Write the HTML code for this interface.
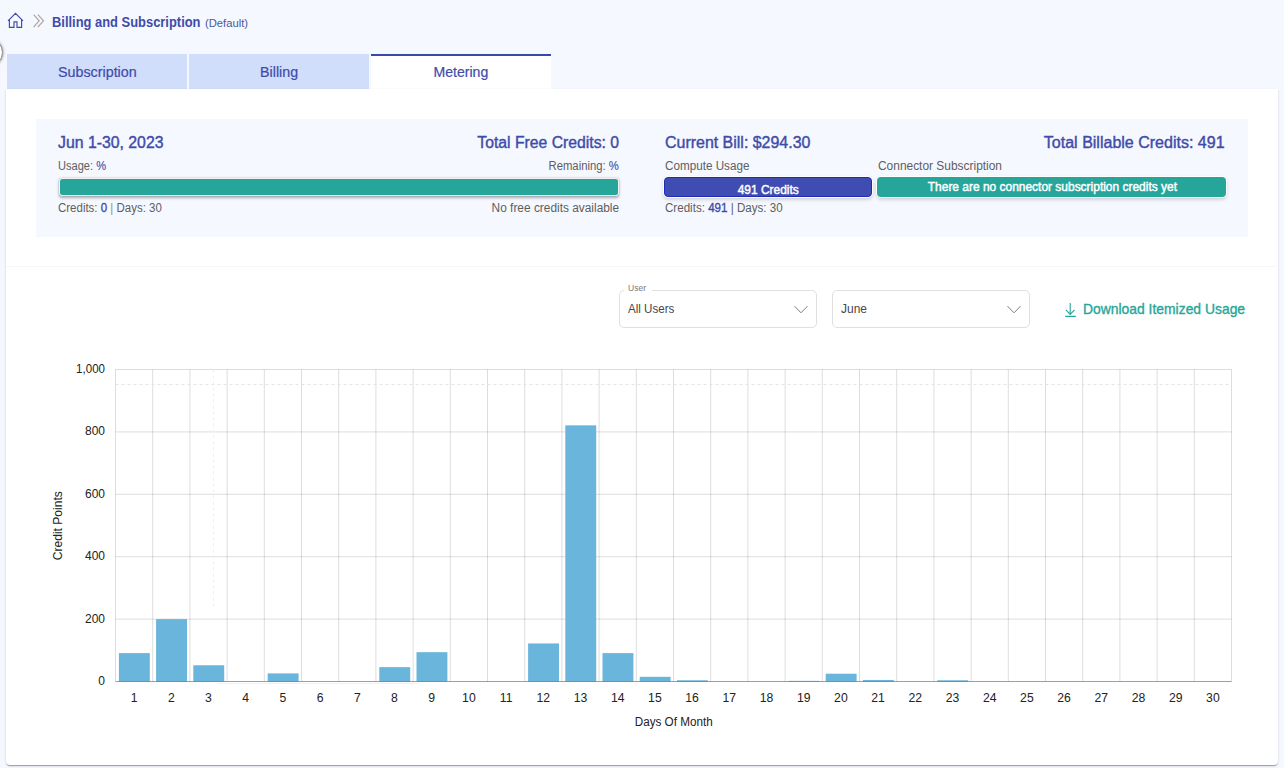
<!DOCTYPE html>
<html><head><meta charset="utf-8">
<style>
html,body{margin:0;padding:0;}
body{width:1284px;height:768px;overflow:hidden;position:relative;background:#F5F8FE;font-family:"Liberation Sans",sans-serif;}
.a{position:absolute;white-space:nowrap;line-height:1;}
</style></head><body>

<div class="a" style="left:-26px;top:38px;width:27px;height:27px;border-radius:50%;background:#fff;border:1px solid #8a8a8a;box-shadow:0 0 3px rgba(0,0,0,.45);"></div>

<svg class="a" style="left:0;top:0" width="50" height="32" viewBox="0 0 50 32">
  <path d="M8 20.8 L15.5 13.3 L23 20.8 M9.4 19.6 V27.3 H14 V21.9 H17 V27.3 H21.6 V19.6" fill="none" stroke="#3F4BA9" stroke-width="1.15"/>
  <path d="M33.6 14.6 L39.2 20.8 L33.6 27 M37.9 14.6 L43.5 20.8 L37.9 27" fill="none" stroke="#ADA6A0" stroke-width="1.15"/>
</svg>

<div class="a" style="left:7px;top:54px;width:180px;height:35px;background:#D0DDFB;"></div>
<div class="a" style="left:189px;top:54px;width:180px;height:35px;background:#D0DDFB;"></div>
<div class="a" style="left:371px;top:54px;width:180px;height:35px;background:#fff;border-top:2px solid #3949AB;box-sizing:border-box;"></div>

<div class="a" style="left:6px;top:89px;width:1272px;height:676px;background:#fff;border-radius:0 0 4px 4px;box-shadow:0 2px 1px -1px rgba(0,0,0,.2),0 1px 1px 0 rgba(0,0,0,.14),0 1px 3px 0 rgba(0,0,0,.12);"></div>

<div class="a" style="left:36px;top:119px;width:1212px;height:118px;background:#F5F8FE;"></div>

<div class="a" style="left:59px;top:178px;width:560px;height:18px;background:#F5EFEE;border-radius:3px;box-shadow:0 1.5px 3px rgba(0,0,0,.3),0 0 1.5px rgba(0,0,0,.22);"></div>
<div class="a" style="left:60px;top:179px;width:558px;height:16px;background:#26A69A;border-radius:2.5px;"></div>
<div class="a" style="left:664px;top:177px;width:208px;height:20px;box-sizing:border-box;background:#3F4DB3;border:1.5px solid #1F2AB8;border-radius:4px;box-shadow:0 0 0 1px rgba(255,255,255,.9),0 2px 4px rgba(0,0,0,.22);"></div>
<div class="a" style="left:877px;top:177px;width:349px;height:20px;background:#26A69A;border-radius:4px;box-shadow:0 0 0 1px rgba(255,255,255,.9),0 2px 4px rgba(0,0,0,.22);"></div>

<div class="a" style="left:6px;top:266px;width:1270px;height:1px;background:#F6F6F8;"></div>

<div class="a" style="left:619px;top:290px;width:198px;height:38px;box-sizing:border-box;border:1px solid #E0E0E0;border-radius:5px;background:#fff;"></div>
<div class="a" style="left:624px;top:288px;width:28px;height:4px;background:#fff;"></div>
<div class="a" style="left:832px;top:290px;width:198px;height:38px;box-sizing:border-box;border:1px solid #E0E0E0;border-radius:5px;background:#fff;"></div>
<svg class="a" style="left:793px;top:305px" width="16" height="10" viewBox="0 0 16 10"><path d="M1.5 1.2 L8 7.8 L14.5 1.2" fill="none" stroke="#7d7d7d" stroke-width="1"/></svg>
<svg class="a" style="left:1006px;top:305px" width="16" height="10" viewBox="0 0 16 10"><path d="M1.5 1.2 L8 7.8 L14.5 1.2" fill="none" stroke="#7d7d7d" stroke-width="1"/></svg>
<svg class="a" style="left:1064px;top:302px" width="14" height="16" viewBox="0 0 14 16"><path d="M6.2 1 V12.4 M1.9 7.8 L6.2 12.4 L10.5 7.8 M1.2 14.4 H11.8" fill="none" stroke="#26A69A" stroke-width="1.1"/></svg>

<svg class="a" style="left:0;top:0" width="1284" height="768" viewBox="0 0 1284 768">
<line x1="115.5" y1="369.50" x2="1231.5" y2="369.50" stroke="rgba(0,0,0,0.135)" stroke-width="1"/>
<line x1="115.5" y1="431.90" x2="1231.5" y2="431.90" stroke="rgba(0,0,0,0.135)" stroke-width="1"/>
<line x1="115.5" y1="494.30" x2="1231.5" y2="494.30" stroke="rgba(0,0,0,0.135)" stroke-width="1"/>
<line x1="115.5" y1="556.70" x2="1231.5" y2="556.70" stroke="rgba(0,0,0,0.135)" stroke-width="1"/>
<line x1="115.5" y1="619.10" x2="1231.5" y2="619.10" stroke="rgba(0,0,0,0.135)" stroke-width="1"/>
<line x1="115.5" y1="681.50" x2="1231.5" y2="681.50" stroke="rgba(0,0,0,0.135)" stroke-width="1"/>
<line x1="115.50" y1="369.5" x2="115.50" y2="681.5" stroke="rgba(0,0,0,0.135)" stroke-width="1"/>
<line x1="152.70" y1="369.5" x2="152.70" y2="681.5" stroke="rgba(0,0,0,0.135)" stroke-width="1"/>
<line x1="189.90" y1="369.5" x2="189.90" y2="681.5" stroke="rgba(0,0,0,0.135)" stroke-width="1"/>
<line x1="227.10" y1="369.5" x2="227.10" y2="681.5" stroke="rgba(0,0,0,0.135)" stroke-width="1"/>
<line x1="264.30" y1="369.5" x2="264.30" y2="681.5" stroke="rgba(0,0,0,0.135)" stroke-width="1"/>
<line x1="301.50" y1="369.5" x2="301.50" y2="681.5" stroke="rgba(0,0,0,0.135)" stroke-width="1"/>
<line x1="338.70" y1="369.5" x2="338.70" y2="681.5" stroke="rgba(0,0,0,0.135)" stroke-width="1"/>
<line x1="375.90" y1="369.5" x2="375.90" y2="681.5" stroke="rgba(0,0,0,0.135)" stroke-width="1"/>
<line x1="413.10" y1="369.5" x2="413.10" y2="681.5" stroke="rgba(0,0,0,0.135)" stroke-width="1"/>
<line x1="450.30" y1="369.5" x2="450.30" y2="681.5" stroke="rgba(0,0,0,0.135)" stroke-width="1"/>
<line x1="487.50" y1="369.5" x2="487.50" y2="681.5" stroke="rgba(0,0,0,0.135)" stroke-width="1"/>
<line x1="524.70" y1="369.5" x2="524.70" y2="681.5" stroke="rgba(0,0,0,0.135)" stroke-width="1"/>
<line x1="561.90" y1="369.5" x2="561.90" y2="681.5" stroke="rgba(0,0,0,0.135)" stroke-width="1"/>
<line x1="599.10" y1="369.5" x2="599.10" y2="681.5" stroke="rgba(0,0,0,0.135)" stroke-width="1"/>
<line x1="636.30" y1="369.5" x2="636.30" y2="681.5" stroke="rgba(0,0,0,0.135)" stroke-width="1"/>
<line x1="673.50" y1="369.5" x2="673.50" y2="681.5" stroke="rgba(0,0,0,0.135)" stroke-width="1"/>
<line x1="710.70" y1="369.5" x2="710.70" y2="681.5" stroke="rgba(0,0,0,0.135)" stroke-width="1"/>
<line x1="747.90" y1="369.5" x2="747.90" y2="681.5" stroke="rgba(0,0,0,0.135)" stroke-width="1"/>
<line x1="785.10" y1="369.5" x2="785.10" y2="681.5" stroke="rgba(0,0,0,0.135)" stroke-width="1"/>
<line x1="822.30" y1="369.5" x2="822.30" y2="681.5" stroke="rgba(0,0,0,0.135)" stroke-width="1"/>
<line x1="859.50" y1="369.5" x2="859.50" y2="681.5" stroke="rgba(0,0,0,0.135)" stroke-width="1"/>
<line x1="896.70" y1="369.5" x2="896.70" y2="681.5" stroke="rgba(0,0,0,0.135)" stroke-width="1"/>
<line x1="933.90" y1="369.5" x2="933.90" y2="681.5" stroke="rgba(0,0,0,0.135)" stroke-width="1"/>
<line x1="971.10" y1="369.5" x2="971.10" y2="681.5" stroke="rgba(0,0,0,0.135)" stroke-width="1"/>
<line x1="1008.30" y1="369.5" x2="1008.30" y2="681.5" stroke="rgba(0,0,0,0.135)" stroke-width="1"/>
<line x1="1045.50" y1="369.5" x2="1045.50" y2="681.5" stroke="rgba(0,0,0,0.135)" stroke-width="1"/>
<line x1="1082.70" y1="369.5" x2="1082.70" y2="681.5" stroke="rgba(0,0,0,0.135)" stroke-width="1"/>
<line x1="1119.90" y1="369.5" x2="1119.90" y2="681.5" stroke="rgba(0,0,0,0.135)" stroke-width="1"/>
<line x1="1157.10" y1="369.5" x2="1157.10" y2="681.5" stroke="rgba(0,0,0,0.135)" stroke-width="1"/>
<line x1="1194.30" y1="369.5" x2="1194.30" y2="681.5" stroke="rgba(0,0,0,0.135)" stroke-width="1"/>
<line x1="1231.50" y1="369.5" x2="1231.50" y2="681.5" stroke="rgba(0,0,0,0.135)" stroke-width="1"/>
<line x1="115.5" y1="384.5" x2="1231.5" y2="384.5" stroke="#E4E4E4" stroke-width="1" stroke-dasharray="3,3"/>
<line x1="213.5" y1="369.5" x2="213.5" y2="610" stroke="#EFEFEF" stroke-width="1" stroke-dasharray="3,3"/>
<rect x="118.90" y="653.11" width="30.90" height="28.39" fill="#69B5DC"/>
<rect x="156.10" y="619.10" width="30.90" height="62.40" fill="#69B5DC"/>
<rect x="193.30" y="665.28" width="30.90" height="16.22" fill="#69B5DC"/>
<rect x="267.70" y="673.39" width="30.90" height="8.11" fill="#69B5DC"/>
<rect x="379.30" y="667.15" width="30.90" height="14.35" fill="#69B5DC"/>
<rect x="416.50" y="652.17" width="30.90" height="29.33" fill="#69B5DC"/>
<rect x="528.10" y="643.44" width="30.90" height="38.06" fill="#69B5DC"/>
<rect x="565.30" y="425.35" width="30.90" height="256.15" fill="#69B5DC"/>
<rect x="602.50" y="653.11" width="30.90" height="28.39" fill="#69B5DC"/>
<rect x="639.70" y="676.82" width="30.90" height="4.68" fill="#69B5DC"/>
<rect x="676.90" y="680.25" width="30.90" height="1.25" fill="#69B5DC"/>
<rect x="788.50" y="680.88" width="30.90" height="0.62" fill="#69B5DC"/>
<rect x="825.70" y="673.70" width="30.90" height="7.80" fill="#69B5DC"/>
<rect x="862.90" y="679.94" width="30.90" height="1.56" fill="#69B5DC"/>
<rect x="937.30" y="680.25" width="30.90" height="1.25" fill="#69B5DC"/>
<line x1="115.5" y1="681.5" x2="1231.5" y2="681.5" stroke="rgba(0,0,0,0.28)" stroke-width="1"/>
<line x1="218" y1="683.5" x2="420" y2="683.5" stroke="#F2F2F2" stroke-width="1"/>
<text x="105" y="372.90" text-anchor="end" font-family="Liberation Sans" font-size="12.2" fill="#222" textLength="28.9" lengthAdjust="spacingAndGlyphs">1,000</text>
<text x="105" y="435.30" text-anchor="end" font-family="Liberation Sans" font-size="12.2" fill="#222" textLength="20.0" lengthAdjust="spacingAndGlyphs">800</text>
<text x="105" y="497.70" text-anchor="end" font-family="Liberation Sans" font-size="12.2" fill="#222" textLength="20.0" lengthAdjust="spacingAndGlyphs">600</text>
<text x="105" y="560.10" text-anchor="end" font-family="Liberation Sans" font-size="12.2" fill="#222" textLength="20.0" lengthAdjust="spacingAndGlyphs">400</text>
<text x="105" y="622.50" text-anchor="end" font-family="Liberation Sans" font-size="12.2" fill="#222" textLength="20.0" lengthAdjust="spacingAndGlyphs">200</text>
<text x="105" y="684.90" text-anchor="end" font-family="Liberation Sans" font-size="12.2" fill="#222" textLength="6.7" lengthAdjust="spacingAndGlyphs">0</text>
<text x="134.10" y="701.8" text-anchor="middle" font-family="Liberation Sans" font-size="12.2" fill="#222">1</text>
<text x="171.30" y="701.8" text-anchor="middle" font-family="Liberation Sans" font-size="12.2" fill="#222">2</text>
<text x="208.50" y="701.8" text-anchor="middle" font-family="Liberation Sans" font-size="12.2" fill="#222">3</text>
<text x="245.70" y="701.8" text-anchor="middle" font-family="Liberation Sans" font-size="12.2" fill="#222">4</text>
<text x="282.90" y="701.8" text-anchor="middle" font-family="Liberation Sans" font-size="12.2" fill="#222">5</text>
<text x="320.10" y="701.8" text-anchor="middle" font-family="Liberation Sans" font-size="12.2" fill="#222">6</text>
<text x="357.30" y="701.8" text-anchor="middle" font-family="Liberation Sans" font-size="12.2" fill="#222">7</text>
<text x="394.50" y="701.8" text-anchor="middle" font-family="Liberation Sans" font-size="12.2" fill="#222">8</text>
<text x="431.70" y="701.8" text-anchor="middle" font-family="Liberation Sans" font-size="12.2" fill="#222">9</text>
<text x="468.90" y="701.8" text-anchor="middle" font-family="Liberation Sans" font-size="12.2" fill="#222">10</text>
<text x="506.10" y="701.8" text-anchor="middle" font-family="Liberation Sans" font-size="12.2" fill="#222">11</text>
<text x="543.30" y="701.8" text-anchor="middle" font-family="Liberation Sans" font-size="12.2" fill="#222">12</text>
<text x="580.50" y="701.8" text-anchor="middle" font-family="Liberation Sans" font-size="12.2" fill="#222">13</text>
<text x="617.70" y="701.8" text-anchor="middle" font-family="Liberation Sans" font-size="12.2" fill="#222">14</text>
<text x="654.90" y="701.8" text-anchor="middle" font-family="Liberation Sans" font-size="12.2" fill="#222">15</text>
<text x="692.10" y="701.8" text-anchor="middle" font-family="Liberation Sans" font-size="12.2" fill="#222">16</text>
<text x="729.30" y="701.8" text-anchor="middle" font-family="Liberation Sans" font-size="12.2" fill="#222">17</text>
<text x="766.50" y="701.8" text-anchor="middle" font-family="Liberation Sans" font-size="12.2" fill="#222">18</text>
<text x="803.70" y="701.8" text-anchor="middle" font-family="Liberation Sans" font-size="12.2" fill="#222">19</text>
<text x="840.90" y="701.8" text-anchor="middle" font-family="Liberation Sans" font-size="12.2" fill="#222">20</text>
<text x="878.10" y="701.8" text-anchor="middle" font-family="Liberation Sans" font-size="12.2" fill="#222">21</text>
<text x="915.30" y="701.8" text-anchor="middle" font-family="Liberation Sans" font-size="12.2" fill="#222">22</text>
<text x="952.50" y="701.8" text-anchor="middle" font-family="Liberation Sans" font-size="12.2" fill="#222">23</text>
<text x="989.70" y="701.8" text-anchor="middle" font-family="Liberation Sans" font-size="12.2" fill="#222">24</text>
<text x="1026.90" y="701.8" text-anchor="middle" font-family="Liberation Sans" font-size="12.2" fill="#222">25</text>
<text x="1064.10" y="701.8" text-anchor="middle" font-family="Liberation Sans" font-size="12.2" fill="#222">26</text>
<text x="1101.30" y="701.8" text-anchor="middle" font-family="Liberation Sans" font-size="12.2" fill="#222">27</text>
<text x="1138.50" y="701.8" text-anchor="middle" font-family="Liberation Sans" font-size="12.2" fill="#222">28</text>
<text x="1175.70" y="701.8" text-anchor="middle" font-family="Liberation Sans" font-size="12.2" fill="#222">29</text>
<text x="1212.90" y="701.8" text-anchor="middle" font-family="Liberation Sans" font-size="12.2" fill="#222">30</text>
<text x="0" y="0" transform="translate(61.8,525.7) rotate(-90)" text-anchor="middle" font-family="Liberation Sans" font-size="12.4" fill="#222" textLength="69.2" lengthAdjust="spacingAndGlyphs">Credit Points</text>
</svg>

<div class="a" style="left:51.90px;transform-origin:0 0;top:15.00px;font-size:14.3px;font-weight:700;color:#3F4BA9;transform:scaleX(0.9032);">Billing and Subscription</div>
<div class="a" style="left:204.50px;transform-origin:0 0;top:18.00px;font-size:11px;font-weight:400;color:#4B57A0;transform:scaleX(1.0193);">(Default)</div>
<div class="a" style="left:57.66px;transform-origin:50% 0;top:65.00px;font-size:14.3px;font-weight:400;color:#3F4BA9;transform:scaleX(1.0002);-webkit-text-stroke:0.2px #3F4BA9">Subscription</div>
<div class="a" style="left:259.92px;transform-origin:50% 0;top:65.00px;font-size:14.3px;font-weight:400;color:#3F4BA9;transform:scaleX(0.9959);-webkit-text-stroke:0.2px #3F4BA9">Billing</div>
<div class="a" style="left:433.19px;transform-origin:50% 0;top:65.00px;font-size:14.3px;font-weight:400;color:#3F4BA9;transform:scaleX(0.9852);-webkit-text-stroke:0.2px #3F4BA9">Metering</div>
<div class="a" style="left:58.00px;transform-origin:0 0;top:135.00px;font-size:16px;font-weight:400;color:#3F4BA9;transform:scaleX(0.9883);-webkit-text-stroke:0.4px #3F4BA9">Jun 1-30, 2023</div>
<div class="a" style="right:665.10px;transform-origin:100% 0;top:135.00px;font-size:16px;font-weight:400;color:#3F4BA9;transform:scaleX(0.9836);-webkit-text-stroke:0.4px #3F4BA9">Total Free Credits: 0</div>
<div class="a" style="left:665.40px;transform-origin:0 0;top:135.00px;font-size:16px;font-weight:400;color:#3F4BA9;transform:scaleX(0.9969);-webkit-text-stroke:0.4px #3F4BA9">Current Bill: $294.30</div>
<div class="a" style="right:59.10px;transform-origin:100% 0;top:135.00px;font-size:16px;font-weight:400;color:#3F4BA9;transform:scaleX(1.0008);-webkit-text-stroke:0.4px #3F4BA9">Total Billable Credits: 491</div>
<div class="a" style="left:58.00px;transform-origin:0 0;top:160.00px;font-size:12.5px;font-weight:400;color:#5E5E5E;transform:scaleX(0.8853);">Usage: <span style="color:#3F4BA9;-webkit-text-stroke:0.1px #3F4BA9">%</span></div>
<div class="a" style="right:665.00px;transform-origin:100% 0;top:160.00px;font-size:12.5px;font-weight:400;color:#5E5E5E;transform:scaleX(0.9033);">Remaining: <span style="color:#3F4BA9;-webkit-text-stroke:0.1px #3F4BA9">%</span></div>
<div class="a" style="left:665.40px;transform-origin:0 0;top:160.00px;font-size:12.5px;font-weight:400;color:#5E5E5E;transform:scaleX(0.9344);">Compute Usage</div>
<div class="a" style="left:877.70px;transform-origin:0 0;top:160.00px;font-size:12.5px;font-weight:400;color:#5E5E5E;transform:scaleX(0.9543);">Connector Subscription</div>
<div class="a" style="left:58.00px;transform-origin:0 0;top:202.00px;font-size:12.5px;font-weight:400;color:#5E5E5E;transform:scaleX(0.9182);">Credits: <span style="color:#3F4BA9;-webkit-text-stroke:0.35px #3F4BA9">0</span> <span style="color:#9a8f7a">|</span> Days: 30</div>
<div class="a" style="right:665.00px;transform-origin:100% 0;top:202.00px;font-size:12.5px;font-weight:400;color:#5E5E5E;transform:scaleX(0.9507);">No free credits available</div>
<div class="a" style="left:665.40px;transform-origin:0 0;top:202.00px;font-size:12.5px;font-weight:400;color:#5E5E5E;transform:scaleX(0.9272);">Credits: <span style="color:#3F4BA9;-webkit-text-stroke:0.35px #3F4BA9">491</span> | Days: 30</div>
<div class="a" style="left:734.96px;transform-origin:50% 0;top:183.00px;font-size:13px;font-weight:400;color:#fff;transform:scaleX(0.9190);-webkit-text-stroke:0.45px #fff">491 Credits</div>
<div class="a" style="left:918.62px;transform-origin:50% 0;top:181.00px;font-size:12.8px;font-weight:400;color:#fff;transform:scaleX(0.9342);-webkit-text-stroke:0.45px #fff">There are no connector subscription credits yet</div>
<div class="a" style="left:628.10px;transform-origin:0 0;top:283.00px;font-size:9.8px;font-weight:400;color:#7a7a7a;transform:scaleX(0.8701);">User</div>
<div class="a" style="left:628.40px;transform-origin:0 0;top:303.00px;font-size:12.8px;font-weight:400;color:#474747;transform:scaleX(0.9062);">All Users</div>
<div class="a" style="left:841.10px;transform-origin:0 0;top:303.00px;font-size:12.8px;font-weight:400;color:#474747;transform:scaleX(0.9369);">June</div>
<div class="a" style="left:1083.00px;transform-origin:0 0;top:302.00px;font-size:14.6px;font-weight:400;color:#26A69A;transform:scaleX(0.9515);-webkit-text-stroke:0.35px #26A69A">Download Itemized Usage</div>
<div class="a" style="left:631.81px;transform-origin:50% 0;top:716.00px;font-size:12.5px;font-weight:400;color:#222;transform:scaleX(0.9343);">Days Of Month</div>

</body></html>
